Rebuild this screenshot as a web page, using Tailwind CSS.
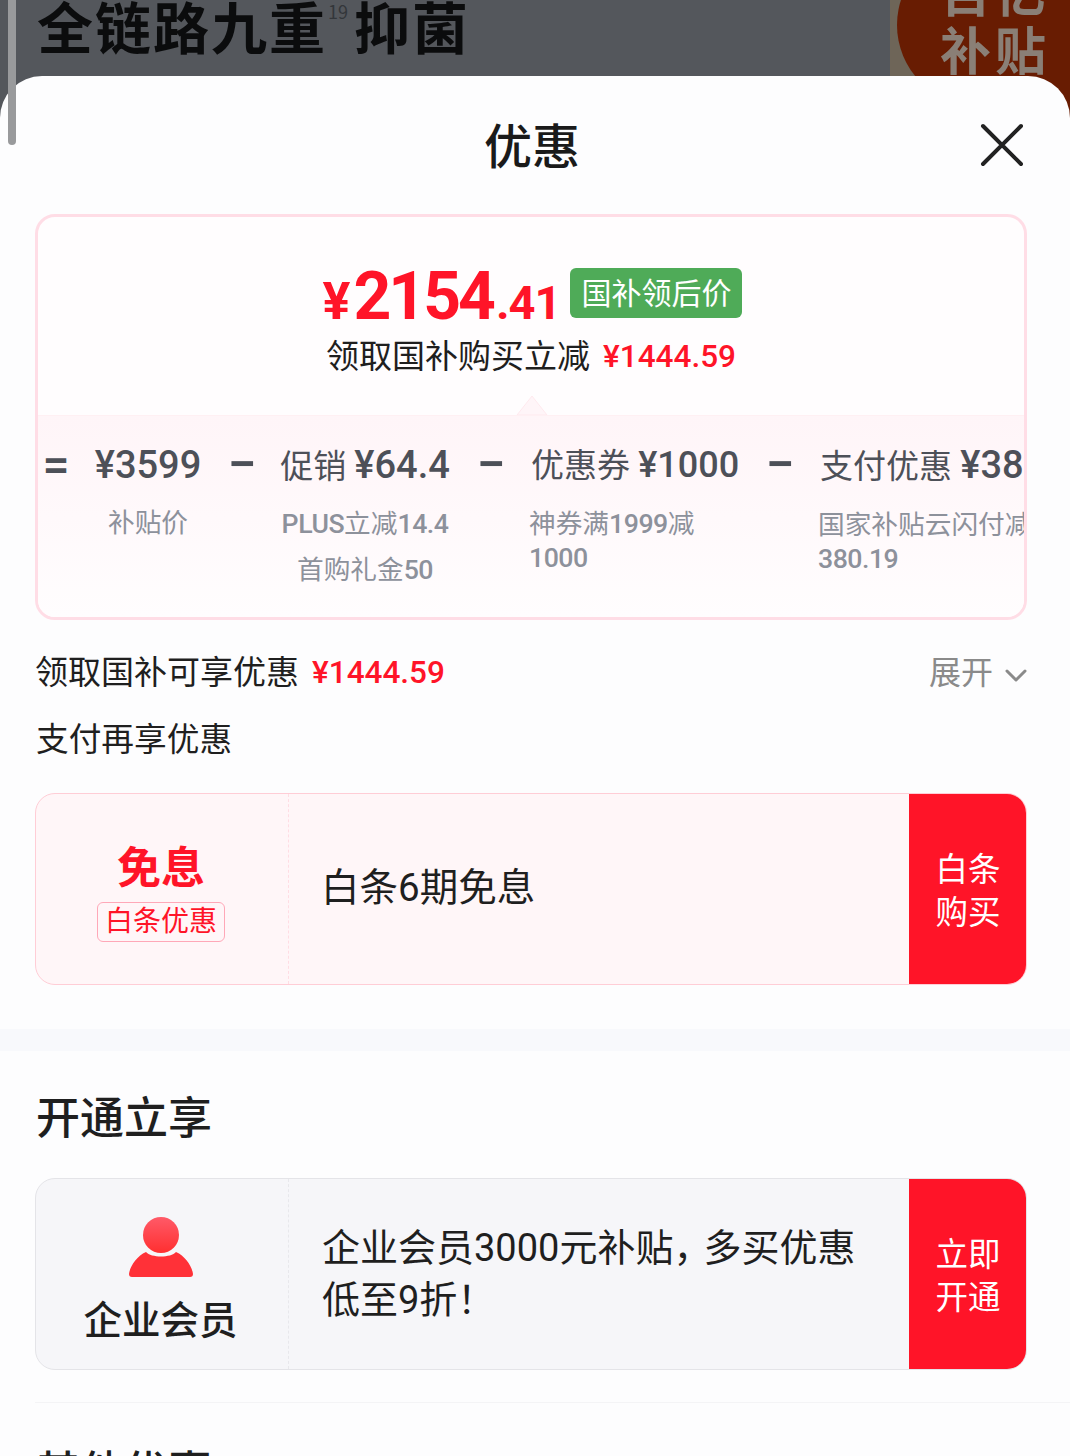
<!DOCTYPE html>
<html lang="zh-CN">
<head>
    <meta charset="UTF-8">
    <meta name="viewport" content="width=device-width, initial-scale=1.0">
    <title>优惠</title>
    <script src="https://cdn.jsdelivr.net/npm/@tailwindcss/browser@4"></script>
</head>
<body class="bg-[#54575c]">
<div class="relative w-[1070px] h-[1456px] overflow-hidden bg-[#54575c] font-['Roboto','Noto_Sans_CJK_SC',sans-serif]">

    <!-- page behind the sheet -->
    <div class="relative flow-root h-[76px]">
        <div class="pl-[37px] mt-[-3px] flex items-start text-[#0b0c0d] text-[56px] leading-[56px] font-bold tracking-[2px] font-['Noto_Sans_CJK_SC',sans-serif]">
            <span>全链路九重</span><span class="text-[18px] leading-[22px] mt-[3px] font-normal tracking-normal text-[#33363a] ml-[1px] mr-[6px]">19</span><span>抑菌</span>
        </div>
        <div class="absolute left-[890px] top-0 w-[180px] h-[76px] bg-[#6e6558]"></div>
        <div class="absolute left-[897px] top-[-56px] w-[162px] h-[162px] rounded-full bg-[#681c02]"></div>
        <div class="absolute left-[978px] top-[-56px] w-[92px] h-[200px] bg-[#681c02]"></div>
        <div class="absolute left-[940px] top-[-39px] text-[#8a7f76] text-[51px] leading-[58px] font-bold tracking-[4px] font-['Noto_Sans_CJK_SC',sans-serif]">百亿<br>补贴</div>
    </div>

    <!-- sheet -->
    <div class="relative h-[1380px] rounded-t-[42px] bg-[#fdfdfe] overflow-hidden">
        <div class="relative h-[138px] flex items-center justify-center pr-[6px]">
            <h1 class="text-[48px] leading-[60px] font-medium text-[#1a1a1a] mt-[6px]">优惠</h1>
            <svg class="absolute left-[980px] top-[47px]" width="44" height="44" viewBox="0 0 44 44" fill="none" stroke="#222222" stroke-width="4" stroke-linecap="round"><path d="M3 3 L41 41 M41 3 L3 41"/></svg>
        </div>

        <!-- price card -->
        <div class="ml-[35px] mr-[43px] h-[406px] border-[3px] border-[#ffdde6] rounded-[20px] overflow-hidden bg-[#fffdfe]">
            <div class="relative h-[198px] flex flex-col items-center pl-[3px]">
                <div class="flex items-start h-[88px] pt-[50px] box-content">
                    <div class="flex items-baseline text-[#ff1428] font-bold h-[60px] leading-[60px]">
                        <span class="text-[52px] mr-[3px]">¥</span><span class="text-[66px] tracking-[-3px]">2154</span><span class="text-[47px] tracking-[-1px] ml-[3px]">.41</span>
                    </div>
                    <div class="ml-[10px] mt-[1px] w-[172px] h-[50px] rounded-[6px] bg-[#4fab58] text-white text-[30px] leading-[52px] text-center">国补领后价</div>
                </div>
                <div class="mt-[-20px] ml-[-3px] flex items-center text-[33px] leading-[44px] text-[#1f1f1f]">
                    <span>领取国补购买立减</span><span class="ml-[13px] text-[#ff1428] text-[31.5px] font-medium">¥1444.59</span>
                </div>
                <svg class="absolute left-[478px] bottom-0" width="32" height="20" viewBox="0 0 32 20"><path d="M1 20 L16 1 L31 20 Z" fill="#fff5f8" stroke="#ffe9ee" stroke-width="1"/></svg>
            </div>
            <div class="h-[202px] border-t border-[#fff0f3] bg-gradient-to-b from-[#fff5f8] to-[#fffdfe] flex items-start pt-[26px] overflow-hidden whitespace-nowrap">
                <div class="w-[36px] shrink-0 flex justify-center text-[48px] leading-[46px] font-medium text-[#4d5058]">=</div>
                <div class="ml-[21px] w-[106px] shrink-0 flex flex-col items-center">
                    <div class="text-[38px] leading-[46px] font-medium text-[#4d5058]">¥3599</div>
                    <div class="mt-[18px] text-[26.7px] leading-[34px] text-[#8d919b]">补贴价</div>
                </div>
                <div class="ml-[30px] w-[22px] shrink-0 flex justify-center text-[52px] leading-[46px] font-medium text-[#4d5058]">−</div>
                <div class="ml-[27px] w-[170px] shrink-0 flex flex-col items-center">
                    <div class="text-[33px] leading-[46px] text-[#4d5058]">促销 <span class="text-[38px] font-medium">¥64.4</span></div>
                    <div class="mt-[17px] text-[26.7px] leading-[35px] text-[#8d919b]"><span class="font-medium tracking-[-0.5px]">PLUS</span>立减<span class="font-medium tracking-[-0.5px]">14.4</span></div>
                    <div class="mt-[11px] text-[26.7px] leading-[35px] text-[#8d919b]">首购礼金<span class="font-medium tracking-[-0.5px]">50</span></div>
                </div>
                <div class="ml-[30px] w-[22px] shrink-0 flex justify-center text-[52px] leading-[46px] font-medium text-[#4d5058]">−</div>
                <div class="ml-[29px] w-[207px] shrink-0">
                    <div class="text-[33px] leading-[46px] text-[#4d5058]">优惠券 <span class="text-[36px] font-medium">¥1000</span></div>
                    <div class="mt-[18px] ml-[-2px] text-[26.7px] leading-[34px] text-[#8d919b]">神券满<span class="font-medium tracking-[-0.5px]">1999</span>减<br><span class="font-medium tracking-[-0.5px]">1000</span></div>
                </div>
                <div class="ml-[31px] w-[22px] shrink-0 flex justify-center text-[52px] leading-[46px] font-medium text-[#4d5058]">−</div>
                <div class="ml-[29px] w-[300px] shrink-0">
                    <div class="text-[33px] leading-[46px] text-[#4d5058]">支付优惠 <span class="text-[38px] font-medium">¥380.19</span></div>
                    <div class="mt-[18px] ml-[-2px] text-[26.7px] leading-[34px] text-[#8d919b]">国家补贴云闪付减<br><span class="font-medium tracking-[-0.5px]">380.19</span></div>
                </div>
            </div>
        </div>

        <!-- summary rows -->
        <div class="mt-[30px] ml-[36px] mr-[43px] flex items-center h-[46px] text-[33px] leading-[46px] text-[#1f1f1f]">
            <span class="ml-[-1px]">领取国补可享优惠</span>
            <span class="ml-[13px] text-[#ff1428] text-[31.5px] font-medium">¥1444.59</span>
            <span class="ml-auto text-[#8a8a8a] text-[32px]">展开</span>
            <svg class="ml-[12px] mt-[6px]" width="22" height="14" viewBox="0 0 22 14" fill="none" stroke="#8a8a8a" stroke-width="3" stroke-linecap="round" stroke-linejoin="round"><path d="M2 2 L11 11 L20 2"/></svg>
        </div>
        <div class="mt-[21px] ml-[36px] text-[32.7px] leading-[46px] text-[#1f1f1f]">支付再享优惠</div>

        <!-- 免息 card -->
        <div class="mt-[30px] ml-[35px] mr-[43px] h-[192px] flex rounded-[20px] border border-[#ffcdd6] bg-[#fff6f8] overflow-hidden">
            <div class="w-[253px] shrink-0 border-r border-dashed border-[#ffdde4] flex flex-col items-center pt-[48px] pr-[2px]">
                <div class="text-[44px] leading-[54px] font-semibold text-[#ff1428]">免息</div>
                <div class="mt-[6px] w-[128px] h-[40px] border border-[#ffa8b8] rounded-[6px] text-[28px] leading-[38px] text-center text-[#ff1428]">白条优惠</div>
            </div>
            <div class="flex-1 flex items-center pl-[32px] pb-[2px] text-[38.5px] leading-[52px] text-[#1f1f1f]">白条6期免息</div>
            <div class="w-[118px] shrink-0 -my-px -mr-px pt-[5px] bg-[#ff1428] text-white text-[32.5px] leading-[43px] flex items-center justify-center text-center">白条<br>购买</div>
        </div>

        <div class="mt-[44px] h-[22px] bg-[#f8f9fc]"></div>

        <h2 class="mt-[40px] ml-[36px] text-[44px] leading-[56px] font-medium text-[#1f1f1f]">开通立享</h2>

        <!-- 企业会员 card -->
        <div class="mt-[31px] ml-[35px] mr-[43px] h-[192px] flex rounded-[20px] border border-[#e4e4e8] bg-[#f6f6f9] overflow-hidden">
            <div class="w-[253px] shrink-0 border-r border-dashed border-[#e8e8ec] flex flex-col items-center pt-[37px] pr-[3px]">
                <svg width="66" height="62" viewBox="0 0 66 62">
                    <defs>
                        <linearGradient id="member" x1="0" y1="0" x2="0" y2="1">
                            <stop offset="0" stop-color="#ff5a68"/>
                            <stop offset="1" stop-color="#ff2f30"/>
                        </linearGradient>
                    </defs>
                    <circle cx="33" cy="19" r="18" fill="url(#member)"/>
                    <path d="M18 36 C23 42 43 42 48 36 C57 40 64 50 65 58 Q65 61 62 61 L4 61 Q1 61 1 58 C2 50 9 40 18 36 Z" fill="#ff3138"/>
                </svg>
                <div class="mt-[17px] text-[38.5px] leading-[52px] font-medium text-[#1f1f1f]">企业会员</div>
            </div>
            <div class="flex-1 flex items-center pl-[33px] text-[38px] leading-[52px] text-[#1f1f1f]"><p>企业会员3000元补贴<span class="tracking-[-8px]">，</span>多买优惠<br>低至9折！</p></div>
            <div class="w-[118px] shrink-0 -my-px -mr-px pt-[5px] bg-[#ff1428] text-white text-[32.5px] leading-[43px] flex items-center justify-center text-center">立即<br>开通</div>
        </div>

        <div class="mt-[32px] ml-[35px] h-px bg-[#f4f4f6]"></div>
        <h2 class="mt-[42px] ml-[36px] text-[44px] leading-[56px] font-medium text-[#1f1f1f]">其他优惠</h2>
    </div>

    <!-- scrollbar -->
    <div class="absolute left-[8px] top-0 w-[8px] h-[145px] rounded-b-[4px] bg-[#999a9c]"></div>
</div>
</body>
</html>
